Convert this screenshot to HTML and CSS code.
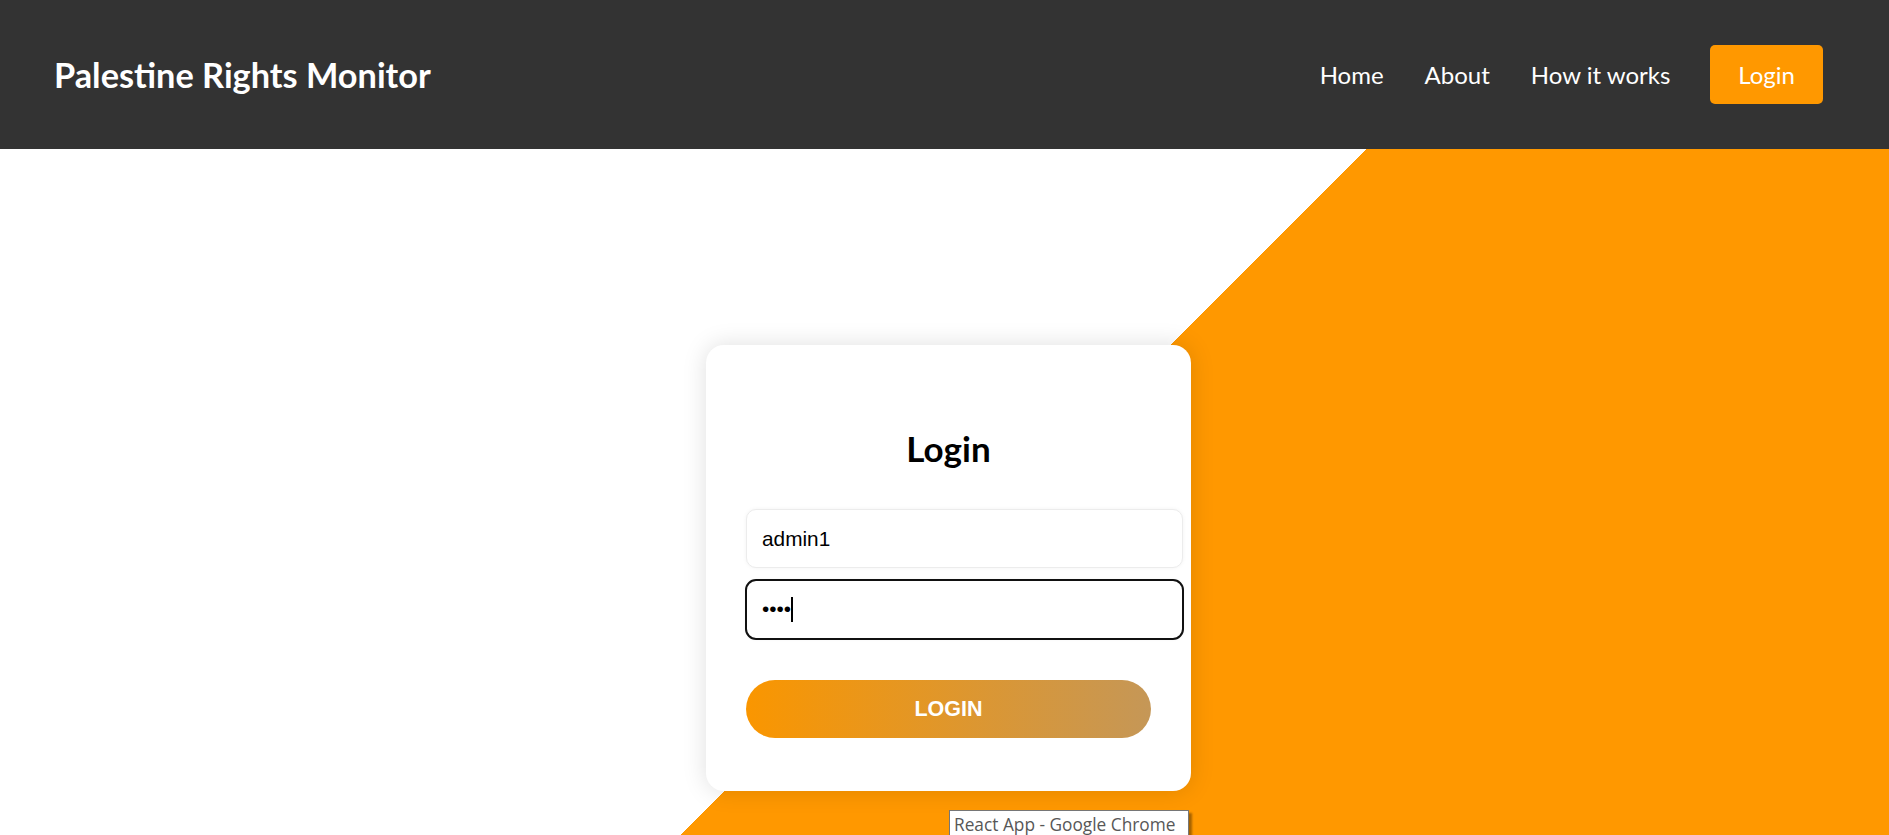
FILE: index.html
```html
<!DOCTYPE html>
<html lang="en">
<head>
<meta charset="utf-8">
<title>React App</title>
<link rel="stylesheet" href="styles.css">
</head>
<body>
<header class="topbar">
  <h1 class="brand">Palestine Rights Monitor</h1>
  <nav class="nav">
    <a class="nav-link" href="#">Home</a>
    <a class="nav-link" href="#">About</a>
    <a class="nav-link" href="#">How it works</a>
    <a class="nav-btn" href="#">Login</a>
  </nav>
</header>
<main class="stage">
  <form class="card">
    <h2 class="card-title">Login</h2>
    <input class="field" type="text" value="admin1">
    <div class="field field-focused"><span class="dots">••••</span><span class="caret"></span></div>
    <button class="submit" type="button">LOGIN</button>
  </form>
  <div class="tooltip">React App - Google Chrome</div>
</main>
</body>
</html>
```
FILE: styles.css
```css
html, body {
  margin: 0;
  padding: 0;
  height: 835px;
  overflow: hidden;
  background: #fff;
}
body {
  font-family: Lato, "Open Sans", sans-serif;
}
.topbar {
  height: 149px;
  box-sizing: border-box;
  background: #333333;
  display: flex;
  align-items: center;
  justify-content: space-between;
  padding: 0 66px 0 54px;
}
.brand {
  margin: 0;
  color: #fff;
  font-size: 34.3px;
  font-weight: 700;
  line-height: 40px;
}
.nav {
  display: flex;
  align-items: center;
  gap: 41px;
}
.nav-link {
  color: #fff;
  text-decoration: none;
  font-size: 24px;
  line-height: 30px;
}
.nav-btn {
  color: #fff;
  text-decoration: none;
  font-size: 24px;
  background: #ff9800;
  border-radius: 5px;
  height: 59px;
  padding: 0 28px;
  display: flex;
  align-items: center;
  margin-left: -1px;
}
.stage {
  position: relative;
  height: 686px;
  box-sizing: border-box;
  background: linear-gradient(135deg, #ffffff 966px, #ff9800 966px);
  display: flex;
  justify-content: center;
  align-items: flex-start;
  padding-top: 196px;
  padding-left: 8px;
}
.card {
  width: 405px;
  padding: 40px 40px 53px;
  background: #fff;
  border-radius: 18px;
  box-shadow: 0 0 24px rgba(0, 0, 0, 0.13);
  display: flex;
  flex-direction: column;
  align-items: flex-start;
}
.card-title {
  align-self: stretch;
  text-align: center;
  margin: 43px 0 41px;
  font-size: 35px;
  line-height: 40px;
  font-weight: 700;
  color: #000;
}
.field {
  width: 100%;
  height: 27px;
  padding: 15px;
  border: 1px solid #ececec;
  border-radius: 10px;
  background: #fff;
  font-family: "Liberation Sans", Arial, sans-serif;
  font-size: 20.8px;
  color: #000;
  outline: none;
  box-shadow: 0 0 4px rgba(0, 0, 0, 0.05);
  margin: 0;
}
.field-focused {
  margin-top: 12px;
  display: flex;
  align-items: center;
  outline: 2px solid #111;
  outline-offset: -1px;
}
.dots {
  letter-spacing: 0;
  line-height: 1;
}
.caret {
  display: inline-block;
  width: 2px;
  height: 25px;
  background: #000;
}
.submit {
  margin-top: 41px;
  width: 405px;
  height: 58px;
  border: none;
  border-radius: 29px;
  background: linear-gradient(90deg, #fa9600, #c59757);
  color: #fff;
  font-family: "Liberation Sans", Arial, sans-serif;
  font-weight: 700;
  font-size: 21.5px;
  padding: 0;
}
.tooltip {
  position: absolute;
  left: 949px;
  top: 661px;
  width: 230px;
  height: 30px;
  padding: 0 4px;
  background: #fff;
  border: 1px solid #767676;
  box-shadow: 3px 3px 2px rgba(0, 0, 0, 0.35);
  color: #575757;
  font-family: "Open Sans", sans-serif;
  font-size: 17.3px;
  line-height: 27px;
  white-space: nowrap;
}
```
